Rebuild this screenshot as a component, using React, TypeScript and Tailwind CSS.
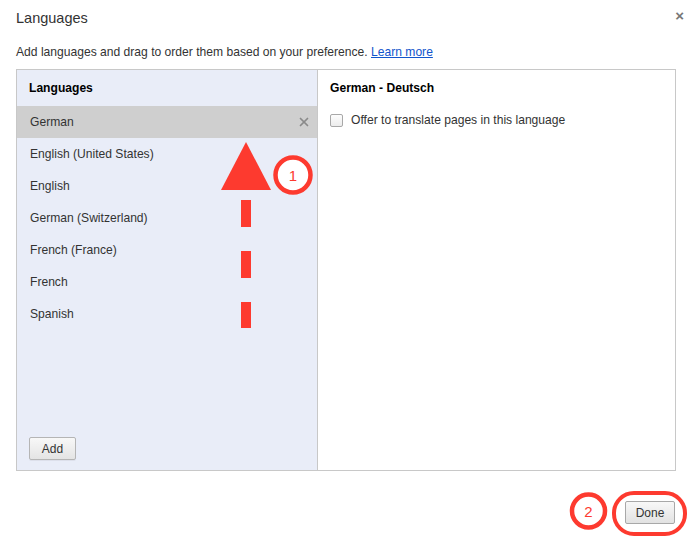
import { X } from "lucide-react";

const languages = [
  "German",
  "English (United States)",
  "English",
  "German (Switzerland)",
  "French (France)",
  "French",
  "Spanish",
];

const LanguageRow = ({ name, selected }: { name: string; selected: boolean }) => (
  <div
    className={
      "flex h-8 items-center justify-between pl-[13px] pr-[6px] " +
      (selected ? "bg-[#cfcfcf]" : "")
    }
  >
    <span>{name}</span>
    {selected && <X size={14} strokeWidth={3} className="text-[#8a8a8a]" />}
  </div>
);

const Annotations = () => (
  <svg
    className="pointer-events-none absolute inset-0"
    width={691}
    height={536}
    viewBox="0 0 691 536"
  >
    {/* arrow pointing up */}
    <polygon points="246,142 221,190 271,190" fill="#fd3a2f" />
    <rect x={241} y={200} width={10} height={27} fill="#fd3a2f" />
    <rect x={241} y={251} width={10} height={27} fill="#fd3a2f" />
    <rect x={241} y={302} width={10} height={26} fill="#fd3a2f" />

    {/* step 1 */}
    <circle cx={293} cy={175} r={17.5} fill="#fff" stroke="#fd3a2f" strokeWidth={4.5} />
    <text
      x={293}
      y={180.5}
      textAnchor="middle"
      fontSize={15}
      fill="#fd3a2f"
      fontFamily="'Liberation Sans', Arial, sans-serif"
    >
      1
    </text>

    {/* step 2 */}
    <circle cx={588.5} cy={511} r={16.5} fill="#fff" stroke="#fd3a2f" strokeWidth={4.5} />
    <text
      x={588.5}
      y={516.5}
      textAnchor="middle"
      fontSize={15}
      fill="#fd3a2f"
      fontFamily="'Liberation Sans', Arial, sans-serif"
    >
      2
    </text>
    <rect
      x={614}
      y={493}
      width={71}
      height={41}
      rx={20}
      fill="none"
      stroke="#fd3a2f"
      strokeWidth={4}
    />
  </svg>
);

const App = () => {
  return (
    <div className="relative flex h-[536px] w-[691px] flex-col bg-white font-['Liberation_Sans',Arial,sans-serif] text-[12.1px] text-[#333]">
      <div className="flex items-start justify-between pl-4 pr-[7px] pt-[8px]">
        <h1 className="text-[14.5px] leading-[20px] text-[#333]">Languages</h1>
        <span className="text-[15px] font-bold leading-none text-[#777]">×</span>
      </div>

      <p className="mt-[16px] px-4 leading-[16px] text-[#333]">
        Add languages and drag to order them based on your preference.{" "}
        <a href="#" className="text-[#1155cc] underline">
          Learn more
        </a>
      </p>

      <div className="mx-4 mt-[9px] flex h-[402px] w-[660px] border border-[#c8c8c8]">
        <div className="flex w-[301px] flex-col border-r border-[#c8c8c8] bg-[#e9edf8] text-[#333]">
          <div className="flex h-[36px] items-center pl-[12px] font-bold text-black">
            Languages
          </div>
          {languages.map((lang, i) => (
            <LanguageRow key={lang} name={lang} selected={i === 0} />
          ))}
          <div className="mt-auto pb-[10px] pl-[12px]">
            <button className="h-[23px] w-[47px] rounded-[2px] border border-[#b5b5b5] bg-gradient-to-b from-[#f8f8f8] to-[#e4e4e4] text-[12px] text-[#333] shadow-[0_1px_0_rgba(0,0,0,0.05)]">
              Add
            </button>
          </div>
        </div>

        <div className="flex flex-1 flex-col pl-[12px]">
          <div className="flex h-[36px] items-center font-bold text-black">German - Deutsch</div>
          <label className="flex h-[28px] items-center gap-[8px] text-[#333]">
            <span className="h-[13px] w-[13px] rounded-[2px] border border-[#a8a8a8] bg-gradient-to-b from-[#fdfdfd] to-[#ececec]" />
            Offer to translate pages in this language
          </label>
        </div>
      </div>

      <div className="mt-auto flex justify-end pb-[12px] pr-4">
        <button className="h-[23px] w-[50px] rounded-[2px] border border-[#a8a8a8] bg-gradient-to-b from-[#f8f8f8] to-[#e2e2e2] text-[12px] text-[#333]">
          Done
        </button>
      </div>

      <Annotations />
    </div>
  );
};

export default App;
